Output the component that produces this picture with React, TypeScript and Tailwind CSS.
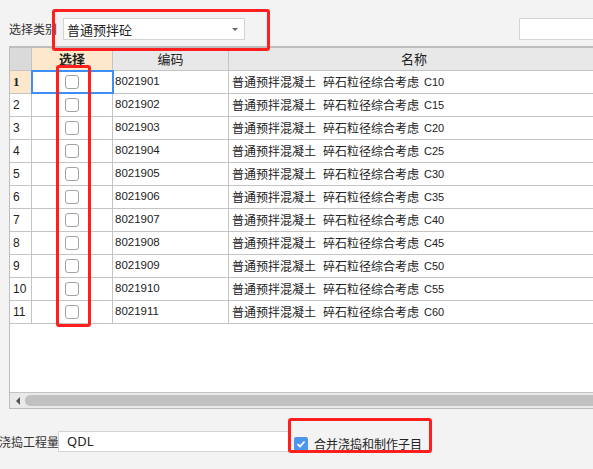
import React from 'react';

const rows = [
    { code: '8021901', grade: 'C10' },
    { code: '8021902', grade: 'C15' },
    { code: '8021903', grade: 'C20' },
    { code: '8021904', grade: 'C25' },
    { code: '8021905', grade: 'C30' },
    { code: '8021906', grade: 'C35' },
    { code: '8021907', grade: 'C40' },
    { code: '8021908', grade: 'C45' },
    { code: '8021909', grade: 'C50' },
    { code: '8021910', grade: 'C55' },
    { code: '8021911', grade: 'C60' },
];

const cjk = { fontFamily: '"Noto Sans CJK SC", "Noto Sans", sans-serif' };
const latin = { fontFamily: '"Liberation Sans", Arial, sans-serif' };

const Box: React.FC = () => (
    <span className="block w-[14px] h-[14px] bg-white border border-[#a3a3a3] rounded-[3px]" />
);

export default function App() {
    return (
        <div className="relative w-[593px] h-[469px] overflow-hidden bg-[#f3f3f3] text-[#222]" style={cjk}>
            {/* top bar */}
            <div className="flex items-center h-[46px] pt-[18px] pb-[6px] pl-[9px]">
                <span className="w-[54px] shrink-0 whitespace-nowrap text-[12px] text-[#333] leading-none">选择类别</span>
                <div className="flex items-center justify-between w-[182px] h-[22px] bg-white border border-[#d4d4d4] pl-[3px] pr-[6px]">
                    <span className="text-[13px] leading-none">普通预拌砼</span>
                    <span className="w-0 h-0 border-l-[3px] border-r-[3px] border-t-[3px] border-l-transparent border-r-transparent border-t-[#666]" />
                </div>
                <div className="flex-1" />
                <div className="w-[80px] h-[22px] bg-white border border-[#d4d4d4] -mr-[6px]" />
            </div>

            {/* grid */}
            <div className="ml-[9px] w-[600px] h-[363px] flex flex-col border-l border-t-2 border-b border-[#bdbdbd] bg-white">
                <div className="flex h-[23px] border-b border-[#c4c4c4] text-[13px]">
                    <div className="w-[22px] bg-[#dadada] border-r border-[#c4c4c4]" />
                    <div className="w-[81px] bg-[#fde8cc] border-r border-[#c4c4c4] flex items-center justify-center font-bold">选择</div>
                    <div className="w-[116px] bg-[#e8e8e8] border-r border-[#c4c4c4] flex items-center justify-center">编码</div>
                    <div className="flex-1 bg-[#e8e8e8] flex items-center justify-center pr-[10px]">名称</div>
                </div>
                {rows.map((r, i) => (
                    <div key={r.code} className="flex h-[23px] border-b border-[#c4c4c4] text-[12px]">
                        <div
                            className={`w-[22px] border-r border-[#c4c4c4] flex items-center pl-[3px] ${i === 0 ? 'bg-[#fde8cc] font-bold' : 'bg-white'}`}
                            style={i === 0 ? { fontFamily: '"Liberation Serif", serif', fontSize: 13 } : latin}
                        >
                            {i + 1}
                        </div>
                        <div
                            className={`w-[81px] border-r border-[#c4c4c4] flex items-center justify-center ${i === 0 ? 'outline-2 outline-[#3d8ef5] -outline-offset-1' : ''}`}
                        >
                            <Box />
                        </div>
                        <div className="w-[116px] border-r border-[#c4c4c4] flex items-center pl-[2px] text-[11.5px]" style={latin}>
                            {r.code}
                        </div>
                        <div className="flex-1 flex items-center pl-[3px] whitespace-nowrap">
                            普通预拌混凝土<span className="w-[7px]" />碎石粒径综合考虑<span className="ml-[5px] text-[11px]" style={latin}>{r.grade}</span>
                        </div>
                    </div>
                ))}
                <div className="flex-1" />
                <div className="h-[16px] border-t border-[#c4c4c4] bg-[#e9e9e9] flex items-center pl-[6px]">
                    <span className="w-0 h-0 border-t-[4px] border-b-[4px] border-r-[4px] border-t-transparent border-b-transparent border-r-[#555]" />
                    <div className="ml-[5px] flex-1 h-[11px] bg-[#c1c1c1] rounded-l-[6px]" />
                </div>
            </div>

            {/* bottom */}
            <div className="flex items-center mt-[22px] h-[21px]">
                <span className="w-[59px] shrink-0 whitespace-nowrap text-[12px] text-[#333] leading-none -ml-[1px]">浇捣工程量</span>
                <div className="w-[232px] shrink-0 h-[21px] bg-white border border-[#d4d4d4] flex items-center pl-[8px] text-[13px]" style={{ fontFamily: '"Noto Sans", sans-serif' }}>
                    QDL
                </div>
                <div className="flex items-center ml-[4px] mt-[5px]">
                    <span className="w-[14px] h-[14px] rounded-[2px] bg-[#4d96ec] flex items-center justify-center">
                        <svg width="10" height="10" viewBox="0 0 10 10">
                            <path d="M1.5 5.2 L4 7.5 L8.5 2.5" fill="none" stroke="white" strokeWidth="1.8" />
                        </svg>
                    </span>
                    <span className="ml-[6px] whitespace-nowrap text-[12px] leading-none">合并浇捣和制作子目</span>
                </div>
            </div>

            {/* annotations */}
            <div className="absolute left-[52px] top-[9px] w-[218px] h-[42px] border-[3px] border-[#ff1f1f] rounded-[3px]" />
            <div className="absolute left-[56px] top-[65px] w-[35px] h-[262px] border-[3px] border-[#ff1f1f] rounded-[3px]" />
            <div className="absolute left-[288px] top-[418px] w-[144px] h-[35px] border-[3px] border-[#ff1f1f] rounded-[3px]" />
        </div>
    );
}
